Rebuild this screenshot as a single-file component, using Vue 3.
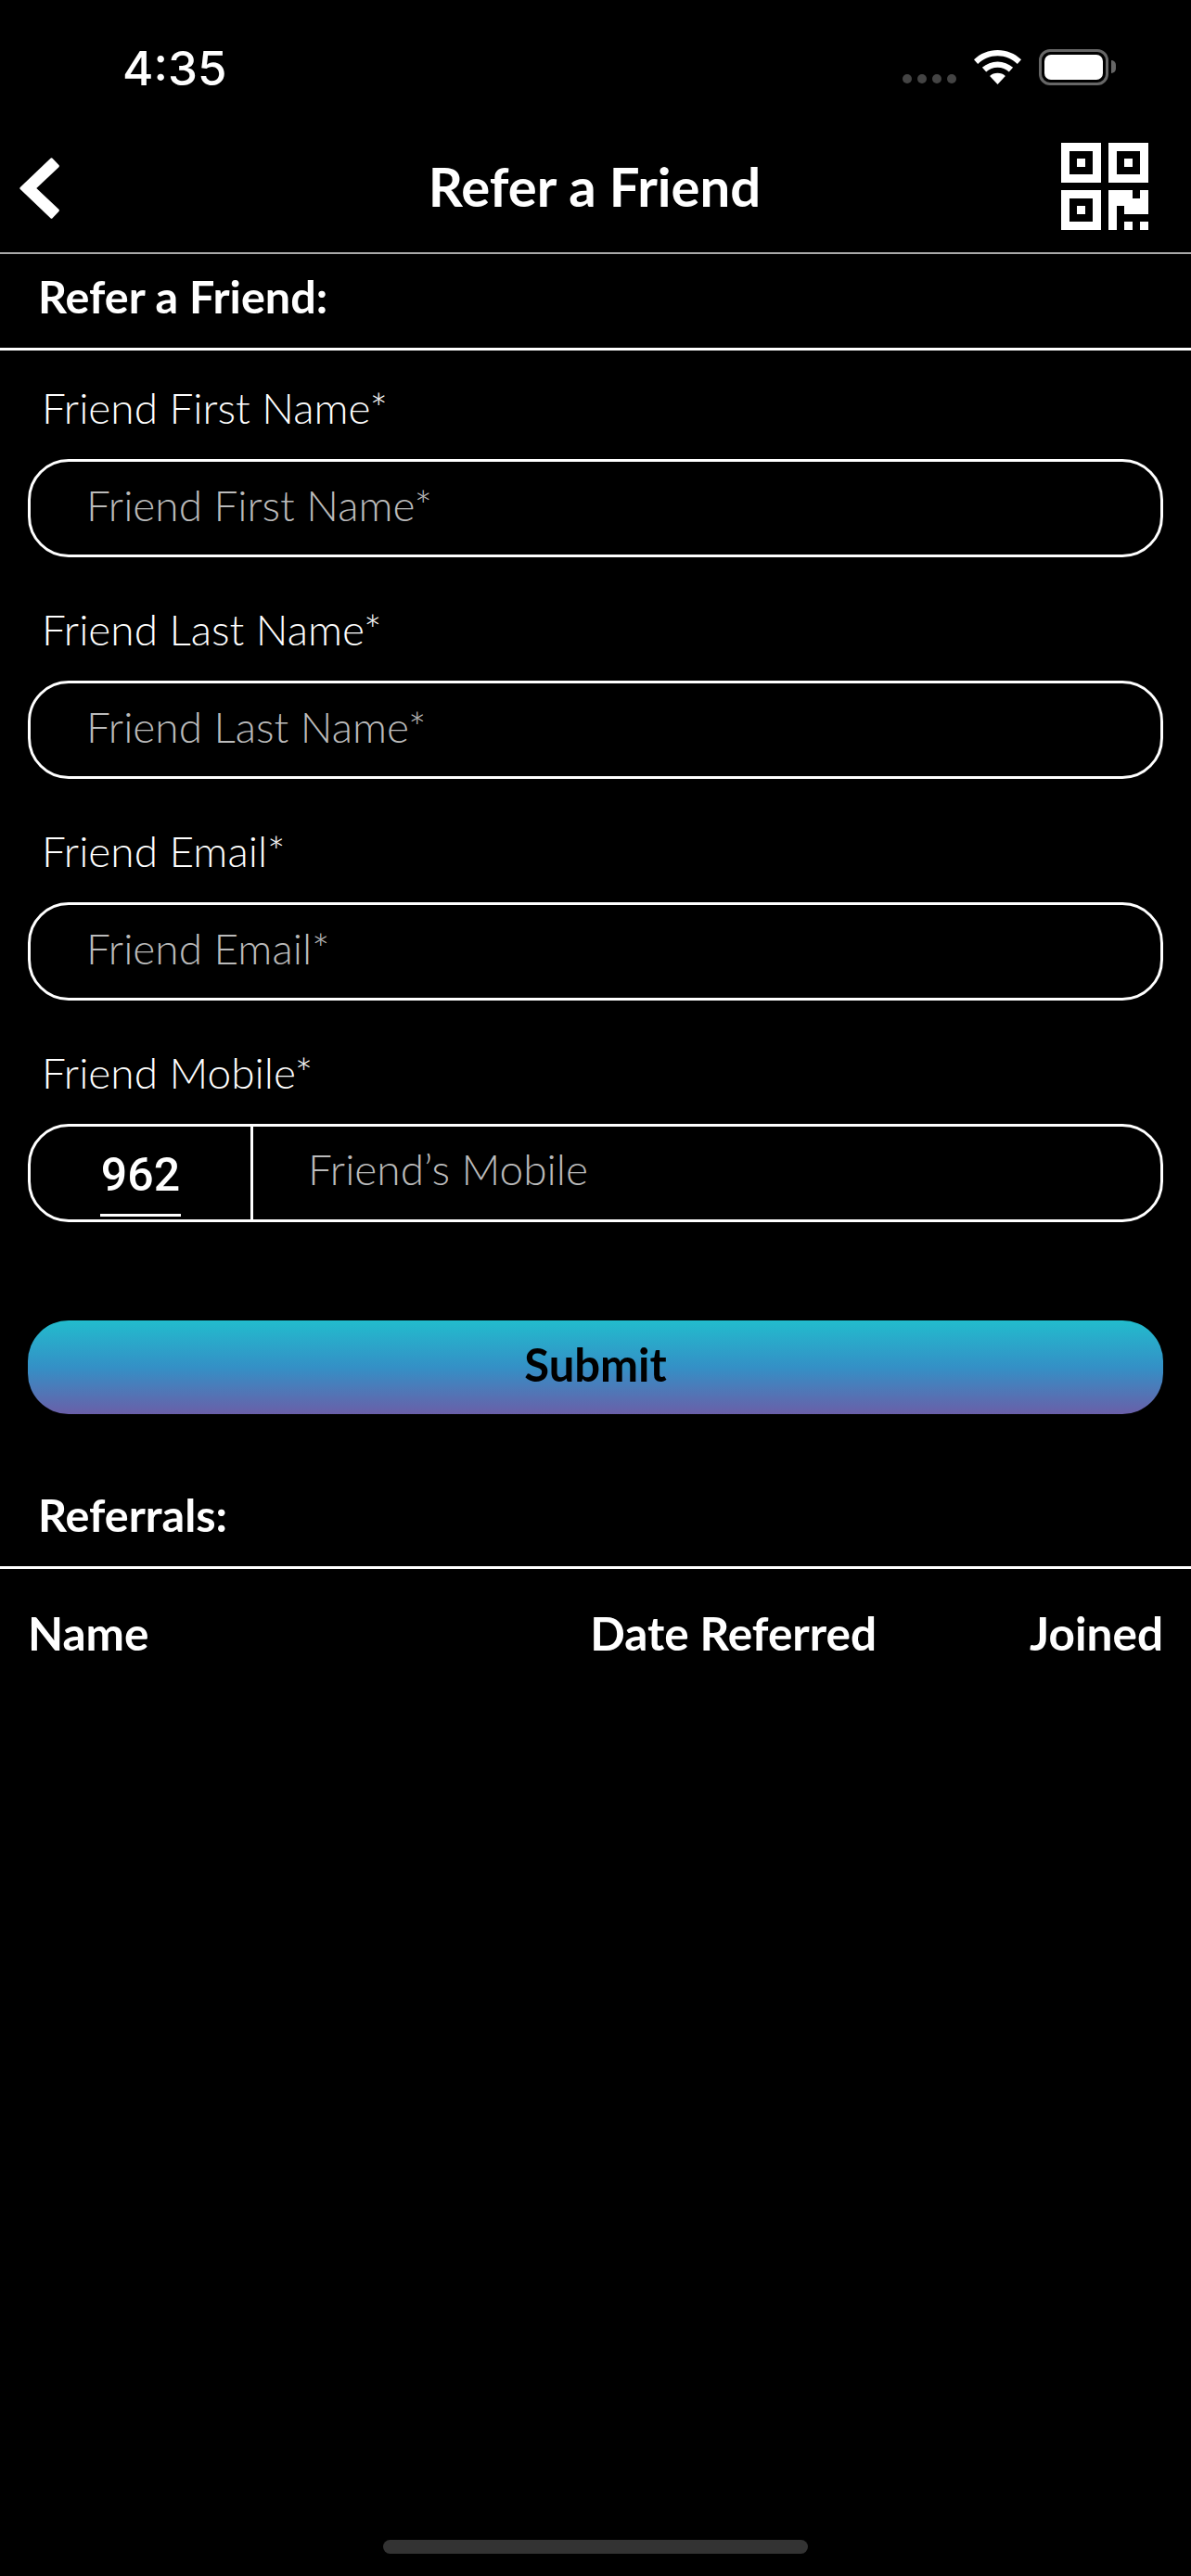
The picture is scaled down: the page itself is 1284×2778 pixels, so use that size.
<script setup>
import { ref } from 'vue';

const fields = ref([
  { key: 'first', label: 'Friend First Name*', value: '' },
  { key: 'last', label: 'Friend Last Name*', value: '' },
  { key: 'email', label: 'Friend Email*', value: '' }
]);
const mobile = ref('');
</script>

<template>
  <div class="page">
    <div class="status-bar">
      <span class="time">4:35</span>
      <div class="status-icons">
        <div class="signal">
          <i v-for="n in 4" :key="n"></i>
        </div>
        <svg class="wifi" viewBox="0 0 51 37" width="51" height="37">
          <path d="M25.5 0C15.8 0 7 3.7 0 10.2l4.2 4.7C10 9.5 17.4 6.3 25.5 6.3s15.5 3.2 21.3 8.6l4.2-4.7C44 3.700 35.200 0 25.500 0z" fill="#fff"/>
          <path d="M25.5 12.4c-6.3 0-12 2.3-16.600 6.400l4.300 4.800c3.300-3 7.600-4.800 12.300-4.800s9 1.800 12.300 4.800l4.300-4.800c-4.600-4.100-10.300-6.400-16.600-6.400z" fill="#fff"/>
          <path d="M25.5 24.8c-3.3 0-6.200 1.100-8.400 3.100L25.500 37l8.400-9.100c-2.200-2-5.100-3.100-8.400-3.100z" fill="#fff"/>
        </svg>
        <div class="battery">
          <div class="battery-fill"></div>
        </div>
      </div>
    </div>

    <header class="top-bar">
      <svg class="back" viewBox="0 0 50 70" width="50" height="70">
        <path d="M36.500 3.900 L3.800 35 L36.500 66.100 L43.400 58.900 L18.200 35 L43.400 11.100 Z" fill="#fff" stroke="#fff" stroke-width="3" stroke-linejoin="round"/>
      </svg>
      <h1>Refer a Friend</h1>
      <svg class="qr" viewBox="0 0 11 11" width="94" height="94" shape-rendering="crispEdges">
        <path fill="#fff" fill-rule="evenodd" d="M0 0h5v5H0zM1 1v3h3V1zM2 2h1v1H2zM6 0h5v5H6zM7 1v3h3V1zM8 2h1v1H8zM0 6h5v5H0zM1 7v3h3V7zM2 8h1v1H2z"/>
        <path fill="#fff" d="M6 6h3v1h1V6h1v3H8V8H7v3H6zM8 10h1v1H8zM10 10h1v1h-1z"/>
      </svg>
    </header>

    <h2 class="section-title first">Refer a Friend:</h2>

    <form class="form" @submit.prevent>
      <div v-for="field in fields" :key="field.key" class="form-group">
        <label :for="field.key">{{ field.label }}</label>
        <input :id="field.key" v-model="field.value" type="text" class="pill-input" :placeholder="field.label" />
      </div>

      <div class="form-group">
        <label for="mobile">Friend Mobile*</label>
        <div class="mobile-row">
          <div class="code"><span>962</span></div>
          <input id="mobile" v-model="mobile" type="text" placeholder="Friend’s Mobile" />
        </div>
      </div>

      <button type="submit" class="submit-btn">Submit</button>
    </form>

    <h2 class="section-title referrals">Referrals:</h2>

    <div class="table-head">
      <span>Name</span>
      <span>Date Referred</span>
      <span>Joined</span>
    </div>

    <div class="home-bar"></div>
  </div>
</template>

<style>
html, body {
  margin: 0;
  background: #000;
}
</style>

<style scoped>
.page {
  width: 1284px;
  height: 2778px;
  display: flex;
  flex-direction: column;
  background: #000;
  color: #fff;
  font-family: "Lato", "Liberation Sans", sans-serif;
  overflow: hidden;
}

.status-bar {
  height: 130px;
  box-sizing: border-box;
  display: flex;
  justify-content: space-between;
  padding: 45px 89px 0 132px;
}

.time {
  font-family: "Inter", "Liberation Sans", sans-serif;
  font-size: 51px;
  font-weight: 500;
  line-height: 58px;
}

.status-icons {
  display: flex;
  align-items: flex-start;
  padding-top: 8px;
}

.signal {
  display: flex;
  gap: 6px;
  margin-top: 27px;
  margin-right: 19px;
}

.signal i {
  width: 10px;
  height: 10px;
  border-radius: 50%;
  background: #444;
}

.wifi {
  margin-top: 1px;
  margin-right: 19px;
}

.battery {
  position: relative;
  width: 75px;
  height: 39px;
  box-sizing: border-box;
  border: 3px solid #666;
  border-radius: 12px;
  padding: 3px;
}

.battery::after {
  content: '';
  position: absolute;
  right: -11px;
  top: 9px;
  width: 5px;
  height: 14px;
  border-radius: 0 7px 7px 0;
  background: #666;
}

.battery-fill {
  height: 100%;
  background: #fff;
  border-radius: 7px;
}

.top-bar {
  height: 144px;
  box-sizing: border-box;
  display: grid;
  grid-template-columns: 1fr auto 1fr;
  align-items: center;
  padding: 0 30px;
  border-bottom: 2px solid #aaa;
}

.back {
  margin-top: 3px;
  margin-left: -11px;
}

.top-bar h1 {
  margin: 0 0 0 -2px;
  font-size: 58px;
  font-weight: 700;
  line-height: 60px;
}

.qr {
  justify-self: end;
  margin-right: 16px;
}

.section-title {
  margin: 0;
  padding: 0 41px 30px;
  font-size: 48.500px;
  font-weight: 700;
  line-height: 52px;
  border-bottom: 3px solid #fff;
}

.section-title.first {
  padding-top: 19px;
}

.section-title.referrals {
  margin-top: 82px;
}

.form {
  display: flex;
  flex-direction: column;
  padding: 36px 30px 0;
}

.form-group {
  display: flex;
  flex-direction: column;
  margin-bottom: 52px;
}

label {
  padding-left: 15px;
  margin-bottom: 29px;
  font-size: 46px;
  font-weight: 300;
  line-height: 52px;
}

input {
  background: transparent;
  border: none;
  outline: none;
  color: #fff;
  font-family: inherit;
  font-size: 46px;
  font-weight: 300;
}

input::placeholder {
  color: #bbb;
  opacity: 1;
}

.pill-input {
  width: 100%;
  height: 106px;
  box-sizing: border-box;
  padding: 0 60px 8px;
  border: 3px solid #fff;
  border-radius: 44px;
}

.mobile-row {
  display: flex;
  height: 106px;
  box-sizing: border-box;
  border: 3px solid #fff;
  border-radius: 44px;
}

.code {
  width: 237px;
  flex-shrink: 0;
  display: flex;
  justify-content: center;
  align-items: flex-end;
  border-right: 3px solid #fff;
}

.code span {
  padding: 0 1px 7px;
  margin-bottom: 3px;
  font-family: "Roboto", "Liberation Sans", sans-serif;
  font-size: 50px;
  font-weight: 500;
  line-height: 70px;
  border-bottom: 3px solid #fff;
}

.mobile-row input {
  flex: 1;
  min-width: 0;
  padding: 0 59px 10px;
}

.submit-btn {
  height: 101px;
  margin-top: 54px;
  border: none;
  border-radius: 44px;
  background: linear-gradient(180deg, #22bccd 0%, #3490c6 50%, #6a5fa8 100%);
  color: #000;
  font-family: inherit;
  font-size: 49px;
  font-weight: 700;
  padding-bottom: 8px;
}

.table-head {
  display: grid;
  grid-template-columns: 1fr auto auto;
  column-gap: 165px;
  padding: 43px 30px 0;
  font-size: 49.500px;
  font-weight: 700;
  line-height: 52px;
}

.home-bar {
  width: 458px;
  height: 15px;
  margin: auto auto 24px;
  border-radius: 8px;
  background: #333;
}
</style>
